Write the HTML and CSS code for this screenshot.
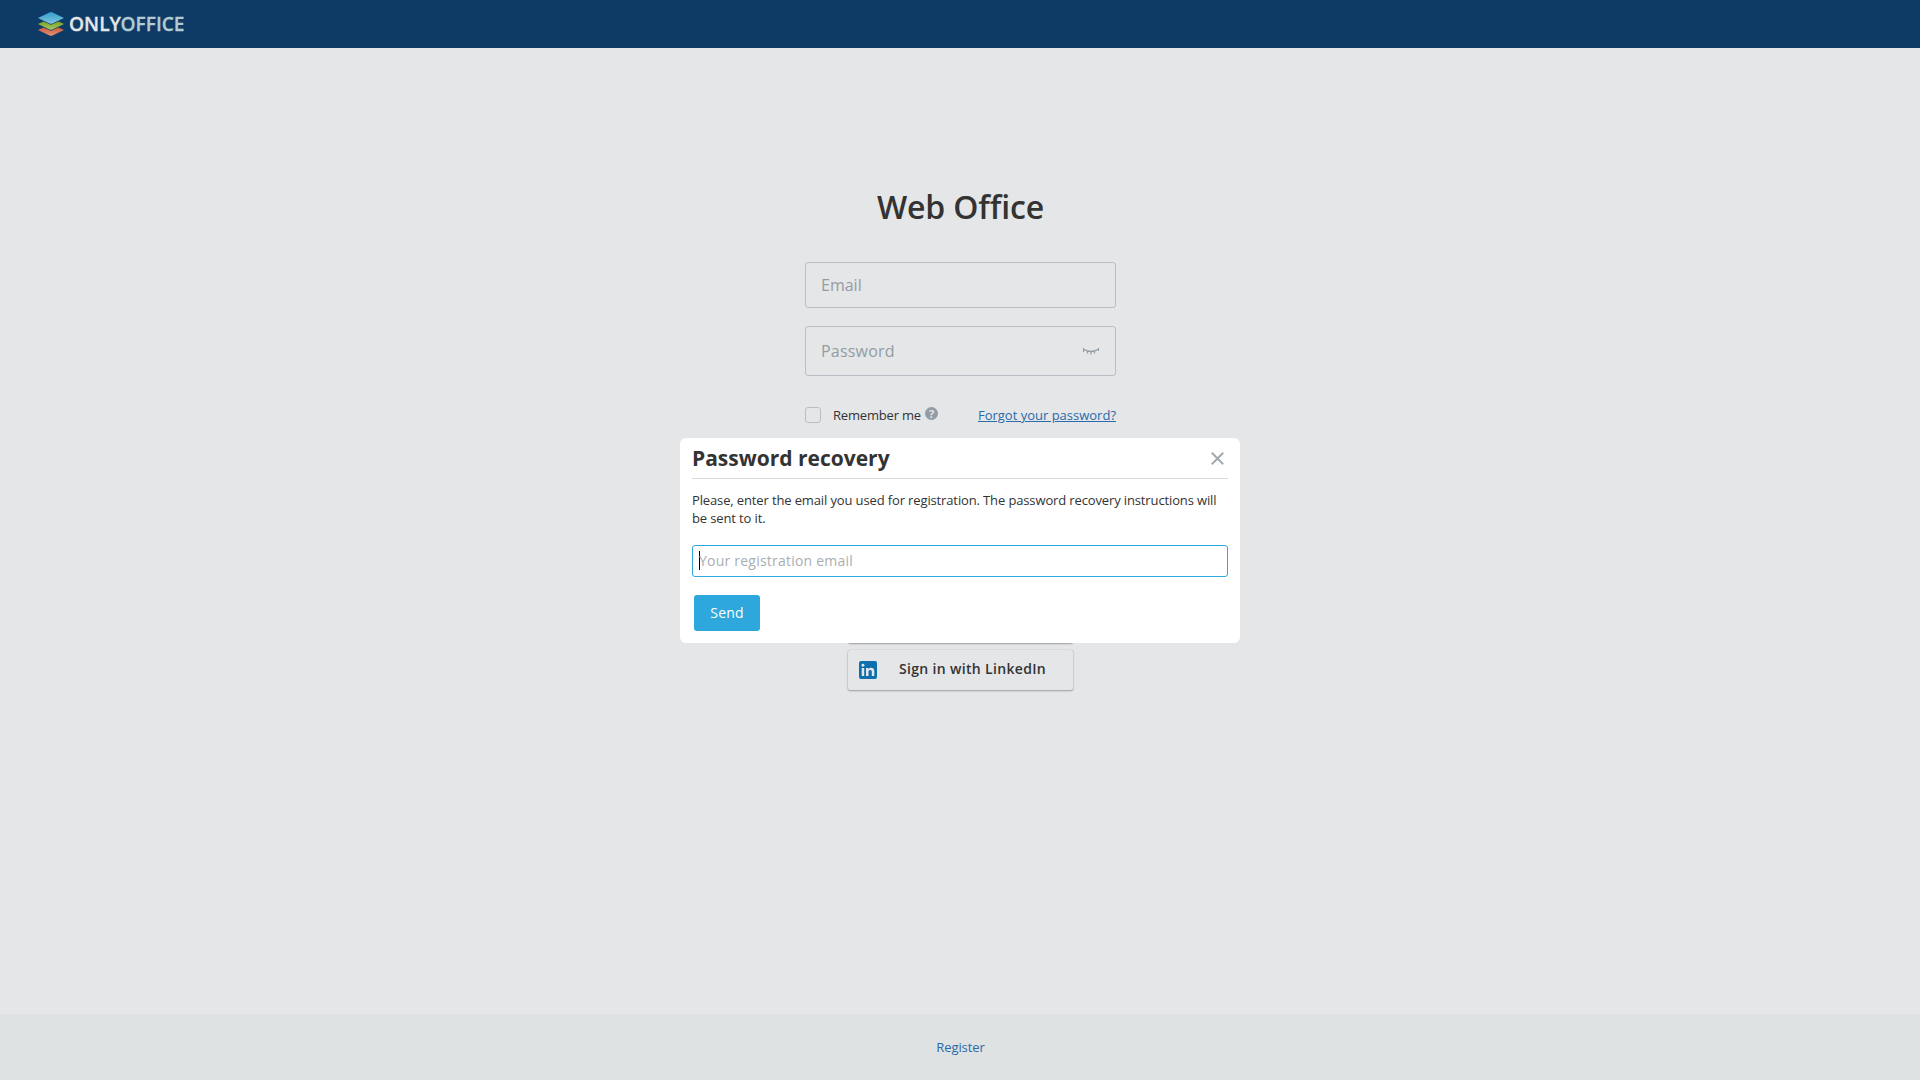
FILE: index.html
```html
<!DOCTYPE html>
<html lang="en">
<head>
<meta charset="utf-8">
<title>Web Office</title>
<link rel="stylesheet" href="styles.css">
</head>
<body>
<header class="header">
  <svg class="logo" width="160" height="32" viewBox="0 0 160 32">
    <defs>
      <linearGradient id="blue" x1="0" y1="0" x2="0" y2="1"><stop offset="0" stop-color="#2f9fd0"/><stop offset="1" stop-color="#84c4dc"/></linearGradient>
      <linearGradient id="green" x1="0" y1="0" x2="0" y2="1"><stop offset="0" stop-color="#7da51c"/><stop offset="1" stop-color="#a5c56a"/></linearGradient>
      <linearGradient id="red" x1="0" y1="0" x2="0" y2="1"><stop offset="0" stop-color="#cf5a38"/><stop offset="1" stop-color="#e0927a"/></linearGradient>
    </defs>
    <path fill="url(#red)" d="M2 20l5.500-2.600 7.500 3.400 7.500-3.400L28 20l-11.500 5.500q-1.500.700-3 0z"/>
    <path fill="url(#green)" d="M2 14l5.500-2.600 7.500 3.400 7.500-3.400L28 14l-11.500 5.500q-1.500.700-3 0z"/>
    <path fill="url(#blue)" d="M2 8l11.500-5.600q1.500-.700 3 0L28 8l-11.500 5.500q-1.500.700-3 0z"/>
    <text class="logo-only" x="33" y="21" textLength="52" lengthAdjust="spacingAndGlyphs">ONLY</text>
    <text class="logo-office" x="84.500" y="21" textLength="64" lengthAdjust="spacingAndGlyphs">OFFICE</text>
  </svg>
</header>
<main class="main">
  <h1 class="title">Web Office</h1>
  <form class="login">
    <div class="field">Email</div>
    <div class="field field-password">Password
      <svg width="16" height="7" viewBox="0 0 16 7" fill="none" stroke="#939ca3" stroke-width="1.200"><path d="M.5 1.200Q8 5.600 15.500 1.200M.5 0v4M4.500 3v2.500M8 3.500v3M11.500 3v2.500M15.500 0v3"/></svg>
    </div>
    <div class="options">
      <span class="checkbox"></span>
      <span class="remember">Remember me</span>
      <span class="help">?</span>
      <a class="link forgot">Forgot your password?</a>
    </div>
  </form>
  <div class="social">
    <div class="social-button"></div>
    <div class="social-button">
      <svg class="linkedin" width="18" height="18" viewBox="0 0 18 18"><rect width="18" height="18" rx="2" fill="#0d6fae"/><path fill="#e5e6e8" d="M2.700 7h2.500v8H2.700zM7 7h2.400v1.100C10.700 6.200 15.300 6 15.300 10v5h-2.500v-4.500c0-2.200-3.300-2-3.300 0V15H7z"/><circle cx="3.950" cy="4.200" r="1.450" fill="#e5e6e8"/></svg>
      <span>Sign in with LinkedIn</span>
    </div>
  </div>
</main>
<footer class="footer"><a class="link-register">Register</a></footer>
<section class="modal">
  <div class="modal-head">
    <h2 class="modal-title">Password recovery</h2>
    <svg class="close" width="13" height="13" viewBox="0 0 13 13" stroke="#a3a9b0" stroke-width="2"><path d="M.8.800l11.400 11.400M12.200.800L.8 12.200"/></svg>
  </div>
  <p class="modal-text">Please, enter the email you used for registration. The password recovery instructions will be sent to it.</p>
  <div class="modal-input"><span class="caret"></span>Your registration email</div>
  <div class="send">Send</div>
</section>
</body>
</html>
```

FILE: styles.css
```css
* { box-sizing: border-box; }
body {
  margin: 0;
  height: 1080px;
  display: flex;
  flex-direction: column;
  background: #e5e6e8;
  color: #333;
  font-family: "Open Sans", sans-serif;
  font-size: 13px;
  overflow: hidden;
}
.header { height: 48px; padding: 10px 0 0 36px; background: #0d3b66; }
.logo { display: block; overflow: visible; }
.logo text { font-size: 20px; font-weight: 600; }
.logo .logo-only { fill: #e5e6e8; stroke: #e5e6e8; stroke-width: .3px; }
.logo .logo-office { fill: #b5cbd3; stroke: #b5cbd3; stroke-width: .3px; }
.main { flex: 1; display: flex; flex-direction: column; align-items: center; }
.title { margin: 137px 0 0 1px; font-size: 32px; line-height: 44px; font-weight: 600; letter-spacing: -.15px; color: #333; }
.login { width: 311px; margin: 33px 0 0 1px; }
.field {
  height: 46px;
  padding: 0 16px 0 15px;
  display: flex;
  align-items: center;
  justify-content: space-between;
  border: 1px solid #b9bfc6;
  border-radius: 3px;
  font-size: 16px;
  color: #939ca3;
}
.field-password { height: 50px; margin-top: 18px; letter-spacing: .2px; }
.options { display: flex; align-items: center; height: 18px; margin-top: 30px; }
.checkbox { width: 16px; height: 16px; border: 1px solid #b9bfc6; border-radius: 3px; }
.remember { margin-left: 12px; letter-spacing: -.18px; }
.help {
  width: 13px;
  height: 13px;
  margin: -3px 0 0 4px;
  border-radius: 50%;
  background: #939ca3;
  color: #e5e6e8;
  font-size: 11px;
  font-weight: 700;
  line-height: 13px;
  text-align: center;
}
.forgot { margin-left: auto; }
.link { color: #2a6aa8; text-decoration: underline; }
.social { width: 225px; margin: 179px 0 0 1px; display: flex; flex-direction: column; gap: 7px; }
.social-button {
  height: 40px;
  padding: 0 0 3px 11px;
  display: flex;
  align-items: center;
  gap: 22px;
  border-radius: 2px;
  box-shadow: 0 1px 2px rgba(0,0,0,.3), 0 0 1px rgba(0,0,0,.3);
  background: #e5e6e8;
  font-size: 14px;
  font-weight: 600;
  letter-spacing: .33px;
}
.linkedin { margin-top: 2px; }
.footer { height: 66px; display: flex; align-items: center; justify-content: center; background: #dee2e3; }
.link-register { color: #2a6aa8; margin-left: 1px; letter-spacing: -.1px; }
.modal {
  position: absolute;
  left: 680px;
  top: 438px;
  width: 560px;
  height: 205px;
  padding: 0 12px;
  border-radius: 6px;
  background: #fff;
}
.modal-head { height: 41px; display: flex; align-items: center; justify-content: space-between; border-bottom: 1px solid #d9dde2; }
.modal-title { margin: 0; font-size: 21px; line-height: 28px; font-weight: 700; }
.close { margin-right: 4.500px; }
.modal-text { margin: 12px 0 0; line-height: 18px; letter-spacing: -.13px; }
.modal-input {
  height: 32px;
  margin-top: 18px;
  padding: 0 0 2px 6px;
  display: flex;
  align-items: center;
  border: 1px solid #2da7dc;
  border-radius: 3px;
  font-size: 14px;
  letter-spacing: .22px;
  color: #a9aeb3;
}
.caret { width: 1px; height: 19px; margin-right: -1px; background: #000; }
.send {
  width: 66px;
  height: 36px;
  margin: 18px 0 0 2px;
  border-radius: 3px;
  background: #2da7dc;
  color: #fff;
  font-size: 14px;
  letter-spacing: .2px;
  line-height: 36px;
  text-align: center;
}
```
